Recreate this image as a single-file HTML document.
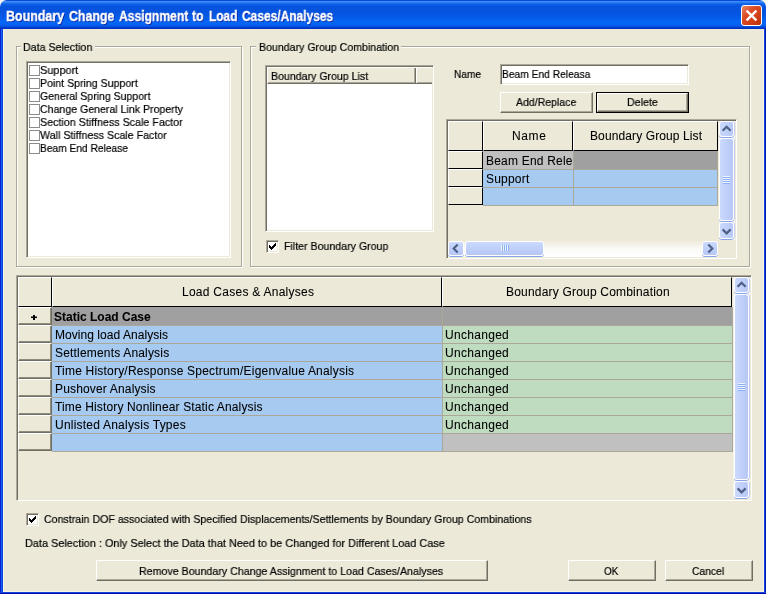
<!DOCTYPE html>
<html><head><meta charset="utf-8">
<style>
html,body{margin:0;padding:0;}
body{width:766px;height:594px;overflow:hidden;position:relative;background:#ece9d8;font-family:"Liberation Sans",sans-serif;font-size:11px;color:#000;}
div,span,svg{position:absolute;box-sizing:border-box;white-space:nowrap;}
.t,.g,.ttl{will-change:transform;}
.t{-webkit-text-stroke:0.2px #000;}
.g{-webkit-text-stroke:0.08px #000;}
.t{font-size:11.5px;line-height:13px;height:13px;transform-origin:0 0;}
.g{font-size:12px;line-height:14px;height:14px;}
.ttl{-webkit-text-stroke:0.35px #fff;transform-origin:0 0;color:#fff;font-weight:bold;font-size:14px;line-height:16px;text-shadow:1px 1px 0 #0a1f9a;}
/* window frame */
#tb{left:0;top:0;width:766px;height:29px;background:linear-gradient(#0a48dc 0px,#0a48dc 0.5px,#3d8ff8 1.5px,#2b7cf2 2.5px,#0f62e8 4px,#0554de 6px,#0553de 12px,#0558e6 16px,#0666f6 22px,#0561f0 25px,#0450e0 26.5px,#0034c6 28px,#0030c0 29px);border-radius:7px 7px 0 0;}
#bl{left:0;top:29px;width:4px;height:565px;background:linear-gradient(90deg,#0a22d0 0 1px,#1b5ef0 1px 2px,#0a44dc 2px 3px,#f8f4e2 3px 4px);}
#br{left:763px;top:29px;width:3px;height:565px;background:linear-gradient(90deg,#f8f4e2 0 1px,#1244e2 1px 2px,#0018b4 2px 3px);}
#bb{left:0;top:591px;width:766px;height:3px;background:linear-gradient(#f8f4e2 0 1px,#1444e0 1px 2px,#000ca8 2px 3px);}
#close{left:741px;top:5px;width:21px;height:21px;border:1px solid #fff;border-radius:3px;background:linear-gradient(135deg,#ea8868 0%,#dd4e26 35%,#d03e16 70%,#b93009 100%);}
/* group */
.grp{border:1px solid #aca899;box-shadow:1px 1px 0 #fff, inset 1px 1px 0 #fff;}
.gm{background:#ece9d8;height:3px;}
.sunk{border:1px solid;border-color:#aca899 #fff #fff #aca899;box-shadow:inset 1px 1px 0 #716f64, inset -1px -1px 0 #ece9d8;background:#fff;}
.cb{width:11px;height:11px;border:1px solid #8c8c8c;background:#fff;}
.cb3{width:13px;height:13px;border:1px solid;border-color:#aca899 #fff #fff #aca899;box-shadow:inset 1px 1px 0 #716f64, inset -1px -1px 0 #ece9d8;background:#fff;}
.btn{border:1px solid;border-color:#fff #716f64 #716f64 #fff;box-shadow:inset -1px -1px 0 #aca899;background:#ece9d8;}
/* grid */
.hd{background:#ece9d8;border:1px solid;border-color:#fff #000 #000 #fff;}
.rh{background:#ece9d8;border:1px solid;border-color:#fff #716f64 #716f64 #fff;box-shadow:inset -1px -1px 0 #8f8c7c;}
.rh2{background:#ece9d8;border:1px solid;border-color:#fff #000 #000 #fff;}
.c{border:solid #aca899;border-width:0 1px 1px 0;}
.blue{background:#a6caf0;}
.green{background:#c0dcc0;}
.g1{background:#a0a0a0;}
.g2{background:#c0c0c0;}
/* scrollbar */
.sbt{background:linear-gradient(90deg,#cbd9fc,#c0d0fa 50%,#b6c7f4);border:1px solid #fff;border-radius:3px;box-shadow:0 1px 0 #8aa4ea,1px 0 0 #c4caf4;}
.sbh{background:linear-gradient(#cbd9fc,#c0d0fa 50%,#b6c7f4);border:1px solid #fff;border-radius:3px;box-shadow:0 1px 0 #8aa4ea;}
.trv{background:linear-gradient(90deg,#f3f1ec,#fefefb);}
.trh{background:linear-gradient(#eeebdc,#fbfaf6 50%,#fff);}
.grv{left:3px;top:50%;margin-top:-4px;width:7px;height:8px;background:repeating-linear-gradient(#eef4fe 0 1px,#8cb0f8 1px 2px);}
.grh{top:3px;left:50%;margin-left:-4px;width:8px;height:6px;background:repeating-linear-gradient(90deg,#eef4fe 0 1px,#8cb0f8 1px 2px);}
</style></head><body>
<div style="left:0;top:0;width:766px;height:10px;background:#f4f3ee"></div><div id="tb"></div><div id="bb"></div><div id="bl"></div><div id="br"></div><div style="left:0;top:592px;width:766px;height:2px;background:linear-gradient(#1444e0 0 1px,#000ca8 1px 2px)"></div>
<div id="close"><svg style="left:0;top:0" width="19" height="19" viewBox="0 0 19 19"><path d="M4.6 4.6 L14.4 14.4 M14.4 4.6 L4.6 14.4" stroke="#fff" stroke-width="2.3" fill="none"/></svg></div>

<!-- Data Selection group -->
<div class="grp" style="left:16px;top:46px;width:226px;height:221px"></div>
<div class="gm" style="left:21px;top:45px;width:74px"></div>
<div class="sunk" style="left:26px;top:61px;width:205px;height:197px"></div>
<div class="cb" style="left:29px;top:65px"></div>
<div class="cb" style="left:29px;top:78px"></div>
<div class="cb" style="left:29px;top:91px"></div>
<div class="cb" style="left:29px;top:104px"></div>
<div class="cb" style="left:29px;top:117px"></div>
<div class="cb" style="left:29px;top:130px"></div>
<div class="cb" style="left:29px;top:143px"></div>

<!-- Boundary Group Combination group -->
<div class="grp" style="left:250px;top:46px;width:500px;height:221px"></div>
<div class="gm" style="left:256px;top:45px;width:145px"></div>
<div class="sunk" style="left:265px;top:65px;width:169px;height:167px"></div>
<div style="left:267px;top:67px;width:165px;height:17px;background:#ece9d8;border-top:1px solid #fff;border-left:1px solid #fff;border-bottom:1px solid #716f64;box-shadow:inset 0 -1px 0 #aca899"></div>
<div style="left:414px;top:68px;width:3px;height:15px;background:linear-gradient(90deg,#aca899 0 1px,#716f64 1px 2px,#fff 2px 3px)"></div>
<div class="cb3" style="left:266px;top:240px"></div>
<svg style="left:266px;top:240px" width="13" height="13" viewBox="0 0 13 13"><path d="M3 5h1v3h-1zM4 6h1v3h-1zM5 7h1v3h-1zM6 6h1v3h-1zM7 5h1v3h-1zM8 4h1v3h-1zM9 3h1v3h-1z" fill="#000" shape-rendering="crispEdges"/></svg>

<div class="sunk" style="left:500px;top:64px;width:189px;height:21px"></div>
<div class="btn" style="left:500px;top:92px;width:93px;height:21px"></div>
<div style="left:596px;top:92px;width:93px;height:21px;border:1px solid #000"></div>
<div class="btn" style="left:597px;top:93px;width:91px;height:19px"></div>

<!-- small grid -->
<div class="sunk" style="left:446px;top:119px;width:291px;height:140px;background:#ece9d8"></div>
<div class="hd" style="left:448px;top:121px;width:35px;height:30px"></div>
<div class="hd" style="left:483px;top:121px;width:90px;height:30px"></div>
<div class="hd" style="left:573px;top:121px;width:145px;height:30px"></div>
<div class="rh2" style="left:448px;top:151px;width:35px;height:18px"></div>
<div class="rh2" style="left:448px;top:169px;width:35px;height:18px"></div>
<div class="rh2" style="left:448px;top:187px;width:35px;height:18px"></div>
<div class="c g2" style="left:483px;top:151px;width:91px;height:19px"></div>
<div class="c g1" style="left:574px;top:151px;width:144px;height:19px"></div>
<div class="c blue" style="left:483px;top:170px;width:91px;height:18px"></div>
<div class="c blue" style="left:574px;top:170px;width:144px;height:18px"></div>
<div class="c blue" style="left:483px;top:188px;width:91px;height:18px"></div>
<div class="c blue" style="left:574px;top:188px;width:144px;height:18px"></div>
<!-- small grid v scrollbar -->
<div class="trv" style="left:719px;top:121px;width:16px;height:119px"></div>
<div class="sbt" style="left:719px;top:121px;width:15px;height:16px"><svg style="left:-1px;top:-1px" width="16" height="16" viewBox="0 0 16 16"><path d="M3.6 9.7 L7.6 5.7 L11.6 9.7" stroke="#4d6185" stroke-width="2.2" fill="none"/></svg></div>
<div class="sbt" style="left:719px;top:138px;width:15px;height:83px"><div class="grv"></div></div>
<div class="sbt" style="left:719px;top:222px;width:15px;height:17px"><svg style="left:-1px;top:-1px" width="16" height="17" viewBox="0 0 16 17"><path d="M3.6 7.4 L7.6 11.4 L11.6 7.4" stroke="#4d6185" stroke-width="2.2" fill="none"/></svg></div>
<!-- small grid h scrollbar -->
<div class="trh" style="left:448px;top:241px;width:270px;height:16px"></div>
<div class="sbh" style="left:448px;top:241px;width:16px;height:15px"><svg style="left:-1px;top:-1px" width="16" height="15" viewBox="0 0 16 15"><path d="M9.7 3.5 L5.7 7.5 L9.7 11.5" stroke="#4d6185" stroke-width="2.2" fill="none"/></svg></div>
<div class="sbh" style="left:465px;top:241px;width:79px;height:15px"><div class="grh"></div></div>
<div class="sbh" style="left:702px;top:241px;width:16px;height:15px"><svg style="left:-1px;top:-1px" width="16" height="15" viewBox="0 0 16 15"><path d="M6.3 3.5 L10.3 7.5 L6.3 11.5" stroke="#4d6185" stroke-width="2.2" fill="none"/></svg></div>

<!-- big grid -->
<div class="sunk" style="left:16px;top:275px;width:736px;height:226px;background:#ece9d8"></div>
<div class="hd" style="left:18px;top:277px;width:34px;height:30px"></div>
<div class="hd" style="left:52px;top:277px;width:390px;height:30px"></div>
<div class="hd" style="left:442px;top:277px;width:290px;height:30px"></div>
<div class="rh" style="left:18px;top:307px;width:34px;height:18px"></div>
<div class="c g1" style="left:52px;top:307px;width:391px;height:19px"></div>
<div class="c g1" style="left:443px;top:307px;width:290px;height:19px"></div>
<div class="rh" style="left:18px;top:325px;width:34px;height:18px"></div>
<div class="c blue" style="left:52px;top:326px;width:391px;height:18px"></div>
<div class="c green" style="left:443px;top:326px;width:290px;height:18px"></div>
<div class="rh" style="left:18px;top:343px;width:34px;height:18px"></div>
<div class="c blue" style="left:52px;top:344px;width:391px;height:18px"></div>
<div class="c green" style="left:443px;top:344px;width:290px;height:18px"></div>
<div class="rh" style="left:18px;top:361px;width:34px;height:18px"></div>
<div class="c blue" style="left:52px;top:362px;width:391px;height:18px"></div>
<div class="c green" style="left:443px;top:362px;width:290px;height:18px"></div>
<div class="rh" style="left:18px;top:379px;width:34px;height:18px"></div>
<div class="c blue" style="left:52px;top:380px;width:391px;height:18px"></div>
<div class="c green" style="left:443px;top:380px;width:290px;height:18px"></div>
<div class="rh" style="left:18px;top:397px;width:34px;height:18px"></div>
<div class="c blue" style="left:52px;top:398px;width:391px;height:18px"></div>
<div class="c green" style="left:443px;top:398px;width:290px;height:18px"></div>
<div class="rh" style="left:18px;top:415px;width:34px;height:18px"></div>
<div class="c blue" style="left:52px;top:416px;width:391px;height:18px"></div>
<div class="c green" style="left:443px;top:416px;width:290px;height:18px"></div>
<div class="rh" style="left:18px;top:433px;width:34px;height:18px"></div>
<div class="c blue" style="left:52px;top:434px;width:391px;height:18px"></div>
<div class="c g2" style="left:443px;top:434px;width:290px;height:18px"></div>
<div style="left:31px;top:317px;width:6px;height:1px;background:#000"></div><div style="left:31px;top:316px;width:6px;height:1px;background:rgba(0,0,0,.45)"></div><div style="left:33px;top:315px;width:2px;height:5px;background:#000"></div>
<!-- v scrollbar -->
<div class="trv" style="left:733px;top:277px;width:17px;height:222px"></div>
<div class="sbt" style="left:734px;top:277px;width:15px;height:16px"><svg style="left:-1px;top:-1px" width="16" height="16" viewBox="0 0 16 16"><path d="M3.6 9.7 L7.6 5.7 L11.6 9.7" stroke="#4d6185" stroke-width="2.2" fill="none"/></svg></div>
<div class="sbt" style="left:734px;top:294px;width:15px;height:186px"><div class="grv"></div></div>
<div class="sbt" style="left:734px;top:481px;width:15px;height:17px"><svg style="left:-1px;top:-1px" width="16" height="17" viewBox="0 0 16 17"><path d="M3.6 7.4 L7.6 11.4 L11.6 7.4" stroke="#4d6185" stroke-width="2.2" fill="none"/></svg></div>

<!-- bottom -->
<div class="cb3" style="left:26px;top:513px"></div>
<svg style="left:26px;top:513px" width="13" height="13" viewBox="0 0 13 13"><path d="M3 5h1v3h-1zM4 6h1v3h-1zM5 7h1v3h-1zM6 6h1v3h-1zM7 5h1v3h-1zM8 4h1v3h-1zM9 3h1v3h-1z" fill="#000" shape-rendering="crispEdges"/></svg>
<div class="btn" style="left:96px;top:560px;width:392px;height:21px"></div>
<div class="btn" style="left:568px;top:560px;width:88px;height:21px"></div>
<div class="btn" style="left:665px;top:560px;width:88px;height:21px"></div>
<div id="tw1" class="ttl" style="left:6.00px;top:8.00px;letter-spacing:0.000px;transform:scaleX(0.8898);">Boundary</div>
<div id="tw2" class="ttl" style="left:69.00px;top:8.00px;letter-spacing:0.000px;transform:scaleX(0.8820);">Change</div>
<div id="tw3" class="ttl" style="left:119.00px;top:8.00px;letter-spacing:0.000px;transform:scaleX(0.8645);">Assignment</div>
<div id="tw4" class="ttl" style="left:192.00px;top:8.00px;letter-spacing:0.000px;transform:scaleX(0.8647);">to</div>
<div id="tw5" class="ttl" style="left:209.00px;top:8.00px;letter-spacing:0.000px;transform:scaleX(0.8497);">Load</div>
<div id="tw6" class="ttl" style="left:242.00px;top:8.00px;letter-spacing:0.000px;transform:scaleX(0.8551);">Cases/Analyses</div>
<div id="gl1" class="t" style="left:23.00px;top:41.00px;letter-spacing:0.000px;transform:scaleX(0.9257);">Data Selection</div>
<div id="gl2" class="t" style="left:259.00px;top:41.00px;letter-spacing:0.000px;transform:scaleX(0.9212);">Boundary Group Combination</div>
<div id="l1" class="t" style="left:40.00px;top:64.00px;letter-spacing:0.000px;transform:scaleX(0.9505);">Support</div>
<div id="l2" class="t" style="left:40.00px;top:77.00px;letter-spacing:0.000px;transform:scaleX(0.9209);">Point Spring Support</div>
<div id="l3" class="t" style="left:40.00px;top:90.00px;letter-spacing:0.000px;transform:scaleX(0.9141);">General Spring Support</div>
<div id="l4" class="t" style="left:40.00px;top:103.00px;letter-spacing:0.000px;transform:scaleX(0.9201);">Change General Link Property</div>
<div id="l5" class="t" style="left:40.00px;top:116.00px;letter-spacing:0.000px;transform:scaleX(0.9316);">Section Stiffness Scale Factor</div>
<div id="l6" class="t" style="left:40.00px;top:129.00px;letter-spacing:0.000px;transform:scaleX(0.9270);">Wall Stiffness Scale Factor</div>
<div id="l7" class="t" style="left:40.00px;top:142.00px;letter-spacing:0.000px;transform:scaleX(0.8872);">Beam End Release</div>
<div id="bgl" class="t" style="left:271.00px;top:70.00px;letter-spacing:0.000px;transform:scaleX(0.9209);">Boundary Group List</div>
<div id="fbg" class="t" style="left:284.00px;top:240.00px;letter-spacing:0.000px;transform:scaleX(0.9224);">Filter Boundary Group</div>
<div id="name" class="t" style="left:454.00px;top:68.00px;letter-spacing:0.000px;transform:scaleX(0.8815);">Name</div>
<div id="inp" class="t" style="left:502.00px;top:68.00px;letter-spacing:0.000px;transform:scaleX(0.8912);">Beam End Releasa</div>
<div id="addr" class="t" style="left:516.00px;top:96.00px;letter-spacing:0.000px;transform:scaleX(0.9154);">Add/Replace</div>
<div id="del" class="t" style="left:627.00px;top:96.00px;letter-spacing:0.000px;transform:scaleX(0.9280);">Delete</div>
<div id="hname" class="g" style="left:512.00px;top:129.00px;letter-spacing:0.600px;">Name</div>
<div id="hbgl" class="g" style="left:590.00px;top:129.00px;letter-spacing:0.111px;">Boundary Group List</div>
<div style="left:483px;top:151px;width:90px;height:18px;overflow:hidden"><div id="r1" class="g" style="left:3.00px;top:3.00px;letter-spacing:0.200px;">Beam End Rele</div></div>
<div id="r2" class="g" style="left:486.00px;top:172.00px;letter-spacing:0.200px;">Support</div>
<div id="hlc" class="g" style="left:182.00px;top:285.00px;letter-spacing:0.260px;">Load Cases &amp; Analyses</div>
<div id="hbgc" class="g" style="left:506.00px;top:285.00px;letter-spacing:0.192px;">Boundary Group Combination</div>
<div id="b0" class="g" style="left:54.00px;top:310.00px;letter-spacing:-0.000px;font-weight:bold;">Static Load Case</div>
<div id="b1" class="g" style="left:55.00px;top:328.00px;letter-spacing:0.050px;">Moving load Analysis</div>
<div id="b2" class="g" style="left:55.00px;top:346.00px;letter-spacing:0.180px;">Settlements Analysis</div>
<div id="b3" class="g" style="left:55.00px;top:364.00px;letter-spacing:0.204px;">Time History/Response Spectrum/Eigenvalue Analysis</div>
<div id="b4" class="g" style="left:55.00px;top:382.00px;letter-spacing:0.160px;">Pushover Analysis</div>
<div id="b5" class="g" style="left:55.00px;top:400.00px;letter-spacing:0.141px;">Time History Nonlinear Static Analysis</div>
<div id="b6" class="g" style="left:55.00px;top:418.00px;letter-spacing:0.218px;">Unlisted Analysis Types</div>
<div id="u1" class="g" style="left:445.00px;top:328.00px;letter-spacing:0.300px;">Unchanged</div>
<div id="u2" class="g" style="left:445.00px;top:346.00px;letter-spacing:0.300px;">Unchanged</div>
<div id="u3" class="g" style="left:445.00px;top:364.00px;letter-spacing:0.300px;">Unchanged</div>
<div id="u4" class="g" style="left:445.00px;top:382.00px;letter-spacing:0.300px;">Unchanged</div>
<div id="u5" class="g" style="left:445.00px;top:400.00px;letter-spacing:0.300px;">Unchanged</div>
<div id="u6" class="g" style="left:445.00px;top:418.00px;letter-spacing:0.300px;">Unchanged</div>
<div id="cdof" class="t" style="left:44.00px;top:513.00px;letter-spacing:0.000px;transform:scaleX(0.9235);">Constrain DOF associated with Specified Displacements/Settlements by Boundary Group Combinations</div>
<div id="dsel" class="t" style="left:25.00px;top:537.00px;letter-spacing:0.000px;transform:scaleX(0.9467);">Data Selection : Only Select the Data that Need to be Changed for Different Load Case</div>
<div id="rem" class="t" style="left:139.00px;top:565.00px;letter-spacing:0.000px;transform:scaleX(0.9256);">Remove Boundary Change Assignment to Load Cases/Analyses</div>
<div id="ok" class="t" style="left:604.00px;top:565.00px;letter-spacing:0.000px;transform:scaleX(0.8563);">OK</div>
<div id="can" class="t" style="left:692.00px;top:565.00px;letter-spacing:0.000px;transform:scaleX(0.8986);">Cancel</div>
</body></html>
